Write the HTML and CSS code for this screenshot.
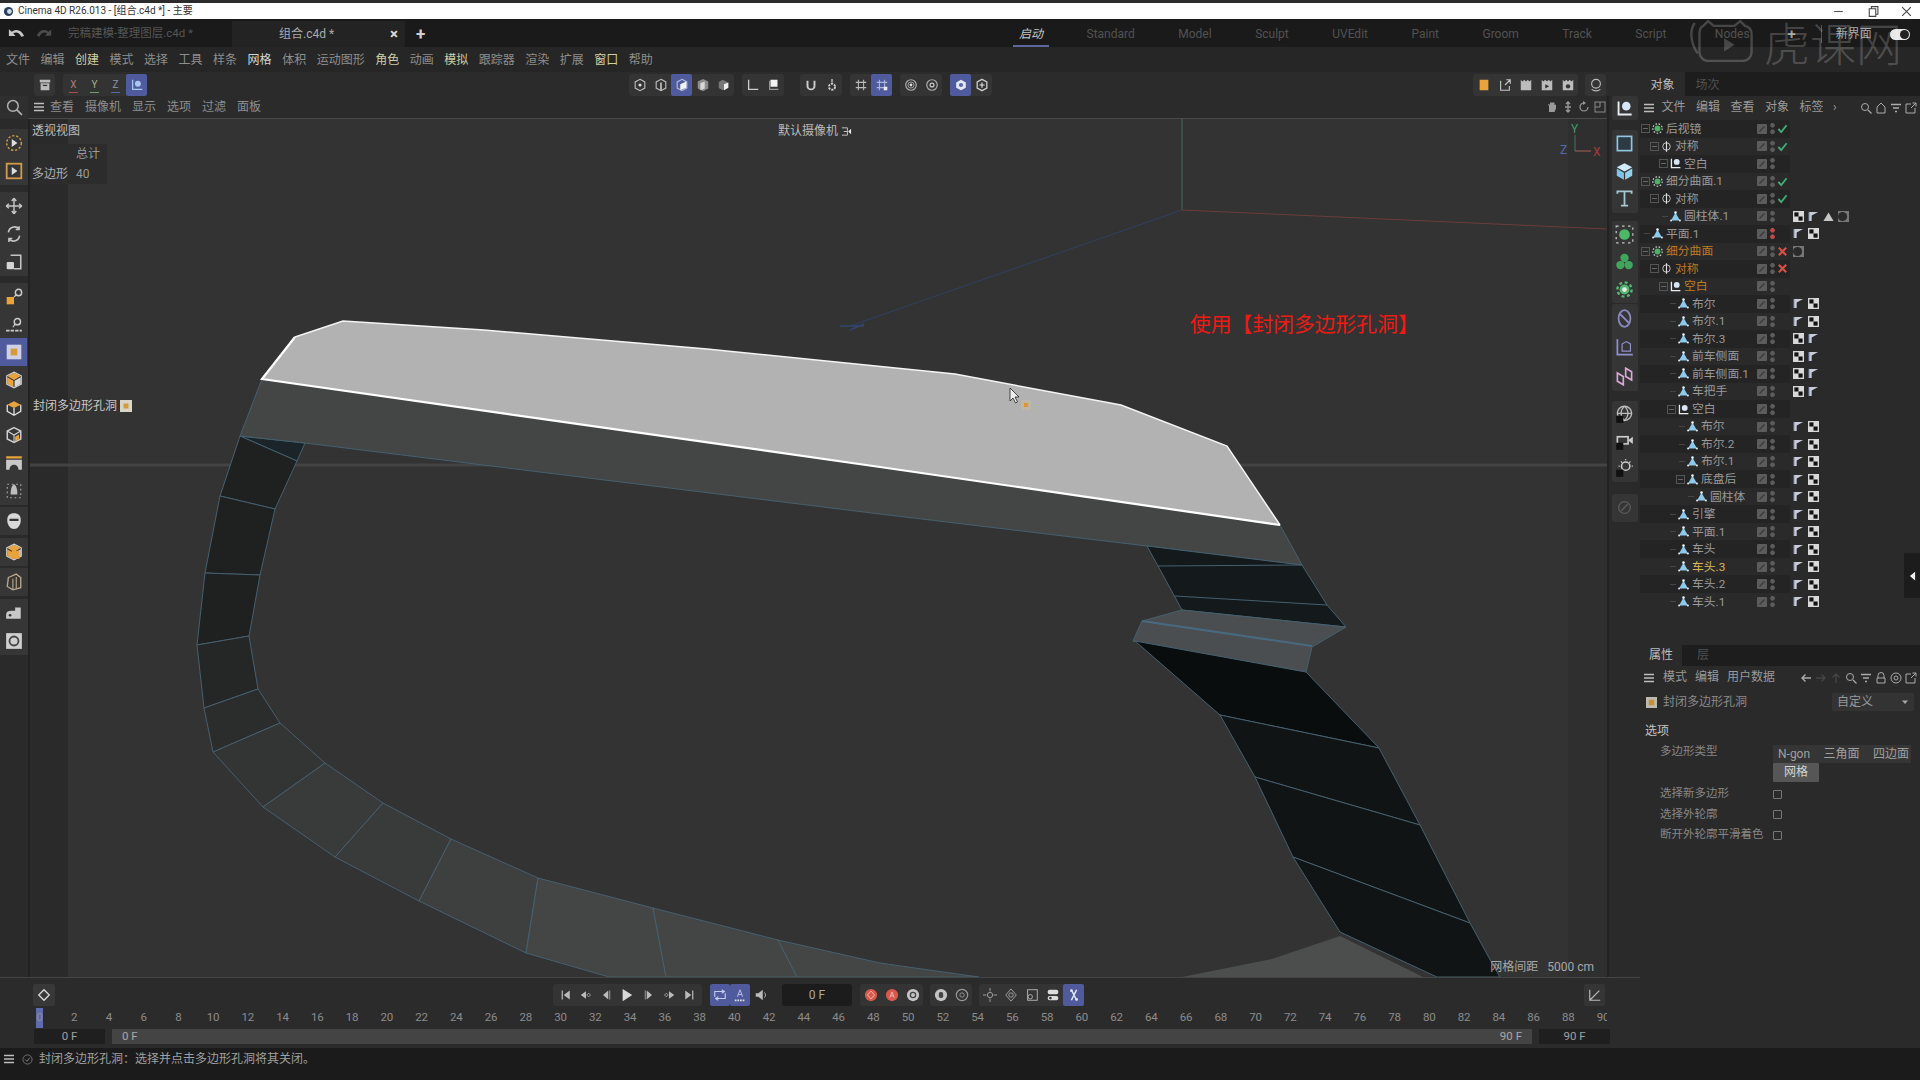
FILE: index.html
```html
<!DOCTYPE html>
<html lang="zh">
<head>
<meta charset="utf-8">
<title>Cinema 4D</title>
<link rel="stylesheet" href="styles.css">
</head>
<body>
<svg class="defs" width="0" height="0">
  <symbol id="nul" viewBox="0 0 16 16"><path d="M3 2v11h11" fill="none" stroke="#e8eef4" stroke-width="1.6"/><circle cx="9.5" cy="6" r="3.6" fill="#d6e6f6"/></symbol>
  <symbol id="sds" viewBox="0 0 16 16"><circle cx="8" cy="8" r="3.6" fill="#4fb06a"/><circle cx="8" cy="8" r="5.8" fill="none" stroke="#c9d6cc" stroke-width="1.4" stroke-dasharray="2 2"/></symbol>
  <symbol id="sym" viewBox="0 0 16 16"><circle cx="8" cy="8" r="4.6" fill="none" stroke="#c4c4c4" stroke-width="1.2"/><path d="M8 1.5v13" stroke="#e0e0e0" stroke-width="1.4"/></symbol>
  <symbol id="pol" viewBox="0 0 16 16"><path d="M8 3 13.5 13h-11z" fill="#8ec8ea"/><circle cx="8" cy="3.2" r="1.6" fill="#e8f2f8"/><circle cx="2.6" cy="13" r="1.3" fill="#dfeaf2"/><circle cx="13.4" cy="13" r="1.3" fill="#dfeaf2"/></symbol>
  <symbol id="ok" viewBox="0 0 12 12"><path d="M1.5 6.5 4.6 10 10.5 2.5" fill="none" stroke="#3fae78" stroke-width="2"/></symbol>
  <symbol id="no" viewBox="0 0 12 12"><path d="M2 2l8 8M10 2l-8 8" stroke="#d4504a" stroke-width="2.4"/></symbol>
  <symbol id="chk" viewBox="0 0 12 12"><rect width="12" height="12" fill="#d8d8d8"/><rect x="1.5" y="1.5" width="4.5" height="4.5" fill="#111"/><rect x="6" y="6" width="4.5" height="4.5" fill="#111"/></symbol>
  <symbol id="flag" viewBox="0 0 12 12"><path d="M1 1h10L4 5v6H1z" fill="#c8ccd8"/><path d="M1 1v10" stroke="#6f7ba0"/></symbol>
  <symbol id="tri" viewBox="0 0 12 12"><path d="M6 1.5 11.500 11H.5z" fill="#c6c6c6"/></symbol>
  <symbol id="mat" viewBox="0 0 12 12"><rect width="12" height="12" fill="#777"/><circle cx="5" cy="6" r="5" fill="#2a2a2a"/></symbol>
  <symbol id="vis" viewBox="0 0 10 10"><rect width="10" height="10" rx="1" fill="#5c5c5c"/><path d="M2.500 7.500 7.500 2.500" stroke="#3a3a3a" stroke-width="1.4"/></symbol>
  <symbol id="burger" viewBox="0 0 12 12"><path d="M1 2.500h10M1 6h10M1 9.500h10" stroke="#bdbdbd" stroke-width="1.400"/></symbol>
  <symbol id="cube" viewBox="0 0 16 16"><path d="M8 1.500 14 4.500v7L8 14.500 2 11.500v-7z" fill="none" stroke="#cfcfcf" stroke-width="1.300"/><path d="M2 4.500 8 8l6-3.500M8 8v6.500" fill="none" stroke="#cfcfcf"/></symbol>
  <symbol id="cubeo" viewBox="0 0 16 16"><path d="M8 1.500 14 4.500 8 8 2 4.500z" fill="#e8a33c"/><path d="M2 5.500 7.500 8.700v5.800L2 11.500z" fill="#e8a33c"/><path d="M14 5.500 8.500 8.700v5.800L14 11.500z" fill="#d8d8d8"/><path d="M8 1 14.500 4.300v7.400L8 15 1.500 11.700V4.300z" fill="none" stroke="#cfcfcf"/></symbol>
  <symbol id="cog" viewBox="0 0 16 16"><circle cx="8" cy="8" r="4.200" fill="#54b672"/><circle cx="8" cy="8" r="2" fill="#e4ece6"/><circle cx="8" cy="8" r="6" fill="none" stroke="#54b672" stroke-width="2" stroke-dasharray="2.500 2.200"/></symbol>
</svg>

<header class="title">
  <svg class="t-logo" viewBox="0 0 12 12"><circle cx="6" cy="6" r="5" fill="#27405f"/><circle cx="7" cy="6" r="2.600" fill="#cfd8e4"/></svg>
  <span>Cinema 4D R26.013 - [组合.c4d *] - 主要</span>
  <div class="winbtns">
    <svg viewBox="0 0 12 12"><path d="M2 6h8" stroke="#555"/></svg>
    <svg viewBox="0 0 12 12"><path d="M3 3.500h6v7H3zM5 3.500v-2h6v7H9" fill="none" stroke="#444"/></svg>
    <svg viewBox="0 0 12 12"><path d="M2 2l8 8M10 2l-8 8" stroke="#444"/></svg>
  </div>
</header>

<nav class="tabs">
  <svg class="undo" viewBox="0 0 20 12"><path d="M2 1v7h7L6.500 5.500C9 3.500 13 4 15 9l3-1C15.500 1.500 9.500 0 5 3.500z" fill="#c8c8c8"/></svg>
  <svg class="redo" viewBox="0 0 20 12"><path d="M18 1v7h-7l2.500-2.500C11 3.500 7 4 5 9L2 8c2.500-6.500 8.500-8 13-4.500z" fill="#4c4c4c"/></svg>
  <span class="doc">完稿建模-整理图层.c4d *</span>
  <div class="doc-on"><span>组合.c4d *</span><b>×</b></div>
  <b class="plus">+</b>
  <div class="layouts">
    <span class="on">启动</span><span>Standard</span><span>Model</span><span>Sculpt</span><span>UVEdit</span><span>Paint</span><span>Groom</span><span>Track</span><span>Script</span><span class="nodes">Nodes</span>
  </div>
  <b class="plus2">+</b>
  <i class="bar-sep"></i>
  <span class="newui">新界面</span>
  <i class="toggle"></i>
</nav>

<nav class="menu">
  <span>文件</span><span>编辑</span><span class="hi">创建</span><span>模式</span><span>选择</span><span>工具</span><span>样条</span><span class="wh">网格</span><span>体积</span><span>运动图形</span><span class="hi">角色</span><span>动画</span><span class="hi">模拟</span><span>跟踪器</span><span>渲染</span><span>扩展</span><span class="hi">窗口</span><span>帮助</span>
</nav>

<div class="work">
  <div class="stage">
    <div class="toolbar">
      <div class="tg archive"><button class="b"><svg viewBox="0 0 16 16"><path d="M2 2h12v3H2zM3 6h10v8H3z" fill="#bbb"/><path d="M5.500 8.500h5" stroke="#333" stroke-width="1.500"/></svg></button></div>
      <div class="tg xyz">
        <button class="b ax x">X</button><button class="b ax y">Y</button><button class="b ax z">Z</button>
        <button class="b blue"><svg viewBox="0 0 16 16"><path d="M3 2v11h11" fill="none" stroke="#a8c8f0" stroke-width="1.400"/><circle cx="9" cy="6.500" r="3.400" fill="#a8c8f0"/></svg></button>
      </div>
      <div class="center-tools">
        <div class="tg">
          <button class="b"><svg viewBox="0 0 16 16"><path d="M8 1.500 13.500 4.500v7L8 14.500 2.500 11.500v-7z" fill="none" stroke="#bbb" stroke-width="1.300"/><circle cx="8" cy="8" r="1.800" fill="#ddd"/></svg></button>
          <button class="b"><svg viewBox="0 0 16 16"><path d="M8 1.500 13.500 4.500v7L8 14.500 2.500 11.500v-7z" fill="none" stroke="#bbb" stroke-width="1.300"/><path d="M8 5v9" stroke="#ddd" stroke-width="1.600"/></svg></button>
          <button class="b blue"><svg viewBox="0 0 16 16"><path d="M8 1.500 13.500 4.500v7L8 14.500 2.500 11.500v-7z" fill="none" stroke="#aeb7dc" stroke-width="1.300"/><path d="M6 7l7-3v7l-7 3z" fill="#f2f2f2"/></svg></button>
          <button class="b"><svg viewBox="0 0 16 16"><path d="M8 1 14 4v8l-6 3-6-3V4z" fill="#8c8c8c"/><path d="M5 6l5-2v8l-5 2z" fill="#d8d8d8"/></svg></button>
          <button class="b"><svg viewBox="0 0 16 16"><path d="M6.500 2 12 4.500v7L6.500 14 2 11.500v-7z" fill="#777"/><path d="M8 7l5-2v6l-5 3z" fill="#eee"/></svg></button>
        </div>
        <div class="tg">
          <button class="b"><svg viewBox="0 0 16 16"><path d="M3 2v11h11" fill="none" stroke="#ccc" stroke-width="1.500"/></svg></button>
          <button class="b"><svg viewBox="0 0 16 16"><path d="M3 3v10h10" fill="none" stroke="#999" stroke-width="1.300"/><rect x="4" y="2" width="8" height="8" fill="#f2f2f2"/></svg></button>
        </div>
        <div class="tg snap">
          <button class="b"><svg viewBox="0 0 16 16"><path d="M4 3v6a4 4 0 0 0 8 0V3" fill="none" stroke="#ccc" stroke-width="2.200"/></svg></button>
          <button class="b"><svg viewBox="0 0 16 16"><path d="M8 1v4" stroke="#ccc" stroke-width="1.500"/><circle cx="8" cy="10" r="3.500" fill="none" stroke="#ccc" stroke-width="2.200" stroke-dasharray="2.500 1.200"/></svg></button>
        </div>
        <div class="tg">
          <button class="b"><svg viewBox="0 0 16 16"><path d="M5 2v12M11 2v12M2 5h12M2 11h12" stroke="#bbb" stroke-width="1.200"/></svg></button>
          <button class="b blue"><svg viewBox="0 0 16 16"><path d="M5 2v12M11 2v12M2 5h12M2 11h12" stroke="#aeb7dc" stroke-width="1.200"/><rect x="10" y="10" width="4" height="4" fill="#eee"/></svg></button>
        </div>
        <div class="tg">
          <button class="b"><svg viewBox="0 0 16 16"><circle cx="8" cy="8" r="6" fill="none" stroke="#aaa" stroke-width="1.400"/><circle cx="8" cy="8" r="3.500" fill="none" stroke="#aaa"/><circle cx="8" cy="8" r="1.600" fill="#ddd"/></svg></button>
          <button class="b"><svg viewBox="0 0 16 16"><circle cx="8" cy="8" r="6" fill="none" stroke="#aaa" stroke-width="1.400"/><circle cx="8" cy="8" r="2.200" fill="none" stroke="#ccc" stroke-width="1.400"/></svg></button>
        </div>
        <div class="tg">
          <button class="b blue"><svg viewBox="0 0 16 16"><path d="M8 2 13.500 5v6L8 14 2.500 11V5z" fill="#e4e7f4"/><circle cx="8" cy="8" r="2.400" fill="#5a68a8"/></svg></button>
          <button class="b"><svg viewBox="0 0 16 16"><path d="M8 1.500 13.500 4.500v7L8 14.500 2.500 11.500v-7z" fill="none" stroke="#ccc" stroke-width="1.500"/><path d="M5 8h6M8 5v6" stroke="#ddd" stroke-width="1.400"/></svg></button>
        </div>
      </div>
      <div class="tg right-tools">
        <button class="b"><svg viewBox="0 0 16 16"><rect x="3" y="2" width="10" height="12" fill="#e8a33c"/></svg></button>
        <button class="b"><svg viewBox="0 0 16 16"><path d="M3 3v11h10V9M8 8l6-6M9.500 2H14v4.500" fill="none" stroke="#c4c4c4" stroke-width="1.300"/></svg></button>
        <button class="b"><svg viewBox="0 0 16 16"><path d="M2 2l2 2 2-2 2 2 2-2 2 2 2-2v12H2z" fill="#bcbcbc"/></svg></button>
        <button class="b"><svg viewBox="0 0 16 16"><path d="M2 2l2 2 2-2 2 2 2-2 2 2 2-2v12H2z" fill="#bcbcbc"/><path d="M6 7v5l4.500-2.500z" fill="#333"/></svg></button>
        <button class="b"><svg viewBox="0 0 16 16"><path d="M2 2l2 2 2-2 2 2 2-2 2 2 2-2v12H2z" fill="#bcbcbc"/><circle cx="8" cy="9.500" r="2.500" fill="#333"/></svg></button>
      </div>
      <div class="tg last-tool"><button class="b"><svg viewBox="0 0 16 16"><circle cx="8" cy="6.500" r="5" fill="none" stroke="#bbb" stroke-width="1.300"/><path d="M3 13c3 2 7 2 10 0" fill="none" stroke="#bbb" stroke-width="1.300"/></svg></button></div>
    </div>

    <div class="mid">
      <aside class="tools">
        <div class="search"><svg viewBox="0 0 16 16"><circle cx="6.500" cy="6.500" r="5" fill="none" stroke="#b0b0b0" stroke-width="1.400"/><path d="M10 10l5 5" stroke="#b0b0b0" stroke-width="1.600"/></svg></div>
        <div class="tool-g g1">
          <button class="tb"><svg viewBox="0 0 16 16"><circle cx="8" cy="8" r="6.500" fill="none" stroke="#c99a4e" stroke-width="1.300" stroke-dasharray="2 1.600"/><path d="M6 4.500v7l5-3.500z" fill="#ddd"/></svg></button>
          <button class="tb"><svg viewBox="0 0 16 16"><rect x="1.500" y="1.500" width="13" height="13" fill="none" stroke="#d09a48" stroke-width="1.600"/><path d="M6 4.500v7l5-3.500z" fill="#ddd"/></svg></button>
        </div>
        <div class="tool-g g2">
          <button class="tb"><svg viewBox="0 0 16 16"><path d="M8 1v14M1 8h14M8 1 6 3.500M8 1l2 2.500M8 15l-2-2.500M8 15l2-2.500M1 8l2.500-2M1 8l2.500 2M15 8l-2.500-2M15 8l-2.500 2" fill="none" stroke="#c4c4c4" stroke-width="1.300"/></svg></button>
          <button class="tb"><svg viewBox="0 0 16 16"><path d="M3 6.500A5.500 5.500 0 0 1 12.500 3.500M13 9.500A5.500 5.500 0 0 1 3.500 12.500M12.500 1v3h-3M3.500 15v-3h3" fill="none" stroke="#c4c4c4" stroke-width="1.400"/></svg></button>
          <button class="tb"><svg viewBox="0 0 16 16"><path d="M5 2h9v12H8" fill="none" stroke="#c4c4c4" stroke-width="1.400"/><rect x="1.500" y="8" width="6.500" height="6.500" rx="1" fill="#d4d4d4"/></svg></button>
        </div>
        <div class="tool-g g3">
          <button class="tb"><svg viewBox="0 0 16 16"><rect x="1.500" y="8" width="6.500" height="6.500" fill="#e8a33c"/><circle cx="12" cy="4" r="2.800" fill="none" stroke="#ccc" stroke-width="1.300"/><path d="M10 6 8 8" stroke="#ccc"/></svg></button>
          <button class="tb"><svg viewBox="0 0 16 16"><path d="M1 13h14" stroke="#ccc" stroke-width="1.500" stroke-dasharray="3 1"/><circle cx="11" cy="5" r="2.800" fill="none" stroke="#ccc" stroke-width="1.300"/><path d="M9 7 7 10" stroke="#ccc"/></svg></button>
          <button class="tb tb-on"><svg viewBox="0 0 16 16"><rect x="1.500" y="1.500" width="13" height="13" fill="#cfd2e6"/><rect x="5" y="5" width="6" height="6" fill="#d9983c"/></svg></button>
          <button class="tb"><svg viewBox="0 0 16 16"><use href="#cubeo"/></svg></button>
          <button class="tb"><svg viewBox="0 0 16 16"><path d="M8 2 14 5 8 8 2 5z" fill="#e8a33c"/><path d="M2 5v6l6 3.500L14 11V5M8 8v6.500" fill="none" stroke="#ddd" stroke-width="1.200"/></svg></button>
          <button class="tb"><svg viewBox="0 0 16 16"><use href="#cube"/><path d="M9 9.500l3.500-2v4l-3.500 2z" fill="#e8a33c"/></svg></button>
          <button class="tb"><svg viewBox="0 0 16 16"><path d="M1 2h14v2H1z" fill="#e8a33c"/><path d="M1 5h14v9h-3c0-6-8-6-8 0H1z" fill="#c8c8c8"/></svg></button>
          <button class="tb"><svg viewBox="0 0 16 16"><rect x="2" y="2" width="12" height="12" fill="none" stroke="#aaa" stroke-dasharray="1.500 2.500"/><path d="M8 2c2 1 3 4 3 9H5c0-5 1-8 3-9z" fill="#bdbdbd"/></svg></button>
        </div>
        <div class="tool-g g4"><button class="tb"><svg viewBox="0 0 16 16"><path d="M8 1c4 0 6 2 6 6 0 5-3 8-6 8s-6-3-6-8c0-4 2-6 6-6z" fill="#d8d8d8"/><path d="M4 6h8v2H4z" fill="#333"/></svg></button></div>
        <div class="tool-g g4"><button class="tb"><svg viewBox="0 0 16 16"><use href="#cubeo"/><rect x="6" y="7" width="7" height="7" fill="#e8a33c"/></svg></button></div>
        <div class="tool-g g4"><button class="tb"><svg viewBox="0 0 16 16"><path d="M3 4l7-3 4 3v9l-7 2-5-3z" fill="none" stroke="#b8a88c" stroke-width="1.200"/><path d="M7 5v10M10 3.500V14" stroke="#b8a88c"/></svg></button></div>
        <div class="tool-g g4">
          <button class="tb"><svg viewBox="0 0 16 16"><path d="M1 13V9c0-2 2-3 5-3h3V3h5v10z" fill="#c8c8c8"/><circle cx="4.500" cy="10" r="1.200" fill="#333"/></svg></button>
          <button class="tb"><svg viewBox="0 0 16 16"><rect x="1" y="1" width="14" height="14" fill="#cfcfcf"/><circle cx="8" cy="8" r="4" fill="none" stroke="#444" stroke-width="1.600"/></svg></button>
        </div>
      </aside>

      <div class="center">
        <div class="viewbar">
          <svg class="burger"><use href="#burger"/></svg>
          <span>查看</span><span>摄像机</span><span>显示</span><span>选项</span><span>过滤</span><span>面板</span>
          <div class="nav-ic">
            <svg viewBox="0 0 12 12"><path d="M3 11V5L2 3.500 3 3l1 1V1.500h4.500V4l1.500-.5v4L8.500 11z" fill="#9a9a9a"/></svg>
            <svg viewBox="0 0 12 12"><path d="M6 1v10M4 3l2-2 2 2M4 9l2 2 2-2M3 6h6" fill="none" stroke="#9a9a9a" stroke-width="1.300"/></svg>
            <svg viewBox="0 0 12 12"><path d="M6 2a4 4 0 1 0 4 4" fill="none" stroke="#9a9a9a" stroke-width="1.200"/><path d="M5 0v4l3-2z" fill="#9a9a9a"/></svg>
            <svg viewBox="0 0 12 12"><rect x="1" y="1" width="10" height="10" fill="none" stroke="#8a8a8a"/><path d="M1 6h5V1" fill="none" stroke="#8a8a8a"/></svg>
          </div>
        </div>

        <main class="viewport">
          <svg class="scene" viewBox="30 119 1577 858" width="1577" height="858">
            <rect x="30" y="119" width="1577" height="858" fill="#333"/>
            <rect x="30" y="119" width="38" height="858" fill="#2a2a2a"/>
            <rect x="1568" y="119" width="39" height="858" fill="#2f2f2f"/>
            <path d="M30 465H1607" stroke="#434343" stroke-width="3"/>
            <path d="M1182 119V210" stroke="#3f6b5e"/>
            <path d="M1182 210 1607 229" stroke="#6a3c3a"/>
            <path d="M1182 210 850 326" stroke="#2f4160"/>
            <path d="M840 326h24M850 330l14-6" stroke="#32466e" stroke-width="1.500"/>

            <g class="mesh">
              <polygon class="m0" points="240,436 305,443 297,461"/>
              <polygon class="m1" points="240,436 297,461 275,509 220,496"/>
              <polygon class="m1" points="220,496 275,509 260,575 205,573"/>
              <polygon class="m1" points="205,573 260,575 249,636 197,645"/>
              <polygon class="m2" points="197,645 249,636 258,689 204,708"/>
              <polygon class="m3" points="204,708 258,689 280,723 213,752"/>
              <polygon class="m4" points="213,752 280,723 325,763 263,807"/>
              <polygon class="m5" points="263,807 325,763 383,803 335,857"/>
              <polygon class="m5" points="335,857 383,803 451,839 419,901"/>
              <polygon class="m6" points="419,901 451,839 538,878 526,953"/>
              <polygon class="m7" points="526,953 538,878 653,908 666,977 609,977"/>
              <polygon class="m7" points="666,977 653,908 778,940 797,977"/>
              <polygon class="m7" points="797,977 778,940 880,963 922,969 979,977"/>
              <polygon class="apron" points="262,379 880,467 1280,525 1302,565 1147,546 880,514 305,443 240,436"/>
              <polygon class="stripe" points="1147,546 1302,565 1327,605 1346,627 1182,610 1158,566"/>
              <path class="edge" d="M1158 566 1302 565M1175 596 1327 605"/>
              <polygon class="ledge" points="1182,610 1346,627 1312,647 1306,672 1133,641 1142,621"/>
              <path class="edge2" d="M1142 621 1312 646"/>
              <polygon class="low1" points="1135,641 1306,672 1379,748 1220,715"/>
              <polygon class="low2" points="1220,715 1379,748 1420,825 1255,777"/>
              <polygon class="low2" points="1255,777 1420,825 1470,923 1293,857"/>
              <polygon class="low2" points="1293,857 1470,923 1493,965 1500,977 1437,977 1340,932"/>
              <polygon class="base" points="1182,977 1272,959 1340,936 1423,977"/>
              <polygon class="face" points="262,379 295,337 343,321 484,330 707,349 955,374 1121,405 1227,446 1280,525 880,467"/>
              <path class="rim" d="M295 337 343 321 484 330 707 349 955 374 1121 405 1227 446 1280 525"/>
              <path class="rim2" d="M295 337 262 379 880 467 1280 525"/>
            </g>

            <path d="M1010 388v13l3-3 2.500 5 2-1-2.500-5h4z" fill="#eee" stroke="#222" stroke-width=".8"/>
            <rect x="1021" y="400" width="10" height="10" fill="#bdb7aa"/>
            <rect x="1024" y="403" width="4" height="4" fill="#e0962f"/>

            <path d="M1575 135V151H1591" fill="none" stroke="#3d7a5f"/>
            <path d="M1575 151H1591" stroke="#a0403a"/>
            <text class="ax-y" x="1571" y="133">Y</text>
            <text class="ax-x" x="1593" y="156">X</text>
            <text class="ax-z" x="1560" y="154">Z</text>
          </svg>
          <span class="vp-title">透视视图</span>
          <div class="stats"><span></span><span>总计</span><span>多边形</span><span>40</span></div>
          <span class="cam">默认摄像机 <svg viewBox="0 0 12 12"><path d="M1 2h6v8H1M3 6h4" fill="none" stroke="#ccc"/><path d="M11 3v6L8 6z" fill="#eee"/></svg></span>
          <span class="hint">封闭多边形孔洞 <svg viewBox="0 0 12 12"><rect width="12" height="12" fill="#d8d4c8"/><rect x="3.500" y="3.500" width="5" height="5" fill="#d49a3e"/></svg></span>
          <span class="caption">使用【封闭多边形孔洞】</span>
          <span class="gridinfo">网格间距&nbsp;&nbsp;&nbsp;5000 cm</span>
        </main>
      </div>

      <aside class="strip">
        <div class="sg s1"><button class="sb"><svg viewBox="0 0 16 16"><use href="#nul"/></svg></button></div>
        <div class="sg s2">
          <button class="sb"><svg viewBox="0 0 16 16"><rect x="2" y="2" width="12" height="12" fill="#2d3a44" stroke="#8fc6e0" stroke-width="1.400"/></svg></button>
          <button class="sb"><svg viewBox="0 0 16 16"><path d="M8 1 14.500 4.500 8 8 1.500 4.500z" fill="#cfeafa"/><path d="M1.500 5.500 7.500 9v6l-6-3.500z" fill="#7cc4ec"/><path d="M14.500 5.500 8.500 9v6l6-3.500z" fill="#92d0f2"/></svg></button>
          <button class="sb"><svg viewBox="0 0 16 16"><path d="M2 4V2h12v2M8 2v12M5 14h6" fill="none" stroke="#a6c6d4" stroke-width="1.500"/></svg></button>
        </div>
        <div class="sg s3">
          <button class="sb"><svg viewBox="0 0 16 16"><circle cx="8" cy="8" r="4.500" fill="#4fb868"/><rect x="1" y="1" width="14" height="14" fill="none" stroke="#ccc" stroke-dasharray="2 3"/></svg></button>
          <button class="sb"><svg viewBox="0 0 16 16"><circle cx="8" cy="5" r="3.500" fill="#3ea75c"/><circle cx="4.500" cy="11" r="3.500" fill="#3ea75c"/><circle cx="11.500" cy="11" r="3.500" fill="#3ea75c"/></svg></button>
          <button class="sb"><svg viewBox="0 0 16 16"><use href="#cog"/></svg></button>
        </div>
        <div class="sg s4">
          <button class="sb"><svg viewBox="0 0 16 16"><ellipse cx="8" cy="8" rx="5" ry="7" fill="none" stroke="#8a88c0" stroke-width="1.500"/><path d="M4 4l8 8" stroke="#8a88c0" stroke-width="1.500"/></svg></button>
          <button class="sb"><svg viewBox="0 0 16 16"><path d="M2 1v13h13" fill="none" stroke="#8f8ed0" stroke-width="1.500"/><path d="M6 5l3.500-2L13 5v6H6z" fill="none" stroke="#8f8ed0"/></svg></button>
          <button class="sb"><svg viewBox="0 0 16 16"><path d="M2 5l5 3v7l-5-3zM9 1l5 3v7l-5-3z" fill="none" stroke="#d8a8d8" stroke-width="1.400"/></svg></button>
        </div>
        <div class="sg s5">
          <button class="sb"><svg viewBox="0 0 16 16"><circle cx="8" cy="7" r="6" fill="none" stroke="#bbb" stroke-width="1.200"/><path d="M2 7h12M8 1c-4 4-4 8 0 12M8 1c4 4 4 8 0 12" fill="none" stroke="#bbb"/><rect x="1" y="9" width="6" height="6" fill="#111"/></svg></button>
          <button class="sb"><svg viewBox="0 0 16 16"><rect x="2" y="4" width="9" height="6" fill="none" stroke="#ccc" stroke-width="1.400"/><path d="M15 4v6l-4-3z" fill="#ccc"/><rect x="1" y="9" width="6" height="6" fill="#111"/></svg></button>
          <button class="sb"><svg viewBox="0 0 16 16"><circle cx="9" cy="6" r="3.500" fill="none" stroke="#ccc" stroke-width="1.300"/><path d="M9 0v1M14 6h1M3 6h1M13 2l-1 1M5 2l1 1" stroke="#ccc"/><rect x="1" y="9" width="6" height="6" fill="#111"/></svg></button>
        </div>
        <div class="sg s6"><button class="sb"><svg viewBox="0 0 16 16"><circle cx="8" cy="8" r="5.500" fill="none" stroke="#5a5a5a" stroke-width="1.300"/><path d="M5 11l6-6" stroke="#5a5a5a" stroke-width="1.400"/></svg></button></div>
      </aside>
    </div>

    <section class="timeline">
      <div class="transport">
        <button class="b key"><svg viewBox="0 0 16 16"><path d="M8 2 14 8 8 14 2 8z" fill="none" stroke="#ddd" stroke-width="1.500"/></svg></button>
        <div class="play">
          <svg viewBox="0 0 16 16"><path d="M3 2v12" stroke="#bbb" stroke-width="1.600"/><path d="M13 2v12L5 8z" fill="#bbb"/></svg>
          <svg viewBox="0 0 16 16"><path d="M8 3v10L1 8z" fill="#bbb"/><path d="M11.500 5.500 14 8l-2.500 2.500L9 8z" fill="none" stroke="#bbb"/></svg>
          <svg viewBox="0 0 16 16"><path d="M11 2v12L4 8z" fill="#bbb"/><path d="M13 2v12" stroke="#bbb"/></svg>
          <svg viewBox="0 0 16 16"><path d="M3 1v14l11-7z" fill="#d8d8d8"/></svg>
          <svg viewBox="0 0 16 16"><path d="M5 2v12l7-6z" fill="#bbb"/><path d="M3 2v12" stroke="#bbb"/></svg>
          <svg viewBox="0 0 16 16"><path d="M8 3v10l7-5z" fill="#bbb"/><path d="M4.500 5.500 7 8l-2.500 2.500L2 8z" fill="none" stroke="#bbb"/></svg>
          <svg viewBox="0 0 16 16"><path d="M13 2v12" stroke="#bbb" stroke-width="1.600"/><path d="M3 2v12l8-6z" fill="#bbb"/></svg>
        </div>
        <div class="loop">
          <button class="b blue"><svg viewBox="0 0 16 16"><path d="M2 10V4h10M14 6v6H4M10 2l3 2-3 2M6 14l-3-2 3-2" fill="none" stroke="#c4cbec" stroke-width="1.300"/></svg></button>
          <button class="b blue"><svg viewBox="0 0 16 16"><path d="M2 14h12" stroke="#ddd" stroke-width="2" stroke-dasharray="2 1"/><path d="M5 10l3-8 3 8M6 7.500h4" fill="none" stroke="#c4cbec"/></svg></button>
          <button class="b plain"><svg viewBox="0 0 16 16"><path d="M2 6h3l5-4v12l-5-4H2z" fill="#bbb"/><path d="M12 5c1.500 2 1.500 4 0 6" fill="none" stroke="#bbb"/></svg></button>
        </div>
        <div class="frame">0 F</div>
        <div class="tg rec">
          <button class="b"><svg viewBox="0 0 16 16"><circle cx="8" cy="8" r="7" fill="#d8594c"/><path d="M8 3.500 12 8l-4 4.500L4 8z" fill="none" stroke="#f4c0b8"/></svg></button>
          <button class="b"><svg viewBox="0 0 16 16"><circle cx="8" cy="8" r="7" fill="#d8594c"/><path d="M5.500 11 8 4.500 10.500 11M6.500 9h3" fill="none" stroke="#f4c0b8"/></svg></button>
          <button class="b"><svg viewBox="0 0 16 16"><circle cx="8" cy="8" r="7" fill="#c4c4c4"/><circle cx="8" cy="8" r="3" fill="none" stroke="#444" stroke-width="1.500"/></svg></button>
        </div>
        <div class="tg rec2">
          <button class="b"><svg viewBox="0 0 16 16"><circle cx="8" cy="8" r="7" fill="#c4c4c4"/><rect x="5.500" y="4.500" width="5" height="7" rx="2" fill="#444"/></svg></button>
          <button class="b"><svg viewBox="0 0 16 16"><circle cx="8" cy="8" r="6.500" fill="none" stroke="#999" stroke-width="1.300"/><circle cx="8" cy="8" r="2.500" fill="none" stroke="#999"/></svg></button>
        </div>
        <div class="tg rec3">
          <button class="b"><svg viewBox="0 0 16 16"><circle cx="8" cy="8" r="3" fill="none" stroke="#aaa"/><path d="M8 0v4M8 12v4M0 8h4M12 8h4" stroke="#aaa"/></svg></button>
          <button class="b"><svg viewBox="0 0 16 16"><path d="M8 1 14 8 8 15 2 8z" fill="none" stroke="#aaa"/><circle cx="8" cy="8" r="2.500" fill="none" stroke="#aaa"/></svg></button>
          <button class="b"><svg viewBox="0 0 16 16"><rect x="3" y="2" width="11" height="12" fill="none" stroke="#bbb"/><circle cx="6" cy="10" r="2.500" fill="#2e2e2e" stroke="#bbb"/></svg></button>
          <button class="b"><svg viewBox="0 0 16 16"><rect x="2" y="2" width="12" height="5" rx="2" fill="#ddd"/><rect x="2" y="9" width="12" height="5" rx="2" fill="#ddd"/><circle cx="5" cy="11.500" r="1.500" fill="#333"/></svg></button>
          <button class="b blue"><svg viewBox="0 0 16 16"><path d="M5 2 11 14M11 2 5 14" stroke="#dfe3f6" stroke-width="1.800"/><circle cx="5" cy="3" r="1.500" fill="#dfe3f6"/><circle cx="11" cy="13" r="1.500" fill="#dfe3f6"/></svg></button>
        </div>
        <button class="b curve"><svg viewBox="0 0 16 16"><path d="M2 2v12h12M2 14 13 3" fill="none" stroke="#bbb" stroke-width="1.300"/></svg></button>
      </div>
      <div class="ruler">
        <span class="cur">0</span><span>2</span><span>4</span><span>6</span><span>8</span><span>10</span><span>12</span><span>14</span><span>16</span><span>18</span><span>20</span><span>22</span><span>24</span><span>26</span><span>28</span><span>30</span><span>32</span><span>34</span><span>36</span><span>38</span><span>40</span><span>42</span><span>44</span><span>46</span><span>48</span><span>50</span><span>52</span><span>54</span><span>56</span><span>58</span><span>60</span><span>62</span><span>64</span><span>66</span><span>68</span><span>70</span><span>72</span><span>74</span><span>76</span><span>78</span><span>80</span><span>82</span><span>84</span><span>86</span><span>88</span><span>90</span>
      </div>
      <div class="range">
        <div class="field">0 F</div>
        <div class="slider"><span>0 F</span><span>90 F</span></div>
        <div class="field">90 F</div>
      </div>
    </section>
  </div>

  <aside class="side">
    <div class="ptabs"><span class="on">对象</span><span>场次</span></div>
    <div class="pmenu">
      <svg class="burger"><use href="#burger"/></svg>
      <span>文件</span><span>编辑</span><span>查看</span><span>对象</span><span>标签</span><em>›</em>
      <div class="pm-ic">
        <svg viewBox="0 0 12 12"><circle cx="5" cy="5" r="3.500" fill="none" stroke="#aaa"/><path d="M8 8l3.500 3.500" stroke="#aaa" stroke-width="1.300"/></svg>
        <svg viewBox="0 0 12 12"><path d="M2 11V5l4-4 4 4v6z" fill="none" stroke="#aaa"/></svg>
        <svg viewBox="0 0 12 12"><path d="M1 2.500h10M3 6h6M5 9.500h2" stroke="#aaa" stroke-width="1.300"/></svg>
        <svg viewBox="0 0 12 12"><path d="M10 6v5H1V2h5M6 6l5-5M7.500 1H11v3.500" fill="none" stroke="#aaa"/></svg>
      </div>
    </div>
    <div class="tree">
      <div class="row d0"><i class="exp box"></i><svg class="oi"><use href="#sds"/></svg><span class="nm">后视镜</span><svg class="vis"><use href="#vis"/></svg><i class="dots"></i><svg class="st"><use href="#ok"/></svg></div>
      <div class="row d1"><i class="exp box"></i><svg class="oi"><use href="#sym"/></svg><span class="nm">对称</span><svg class="vis"><use href="#vis"/></svg><i class="dots"></i><svg class="st"><use href="#ok"/></svg></div>
      <div class="row d2"><i class="exp box"></i><svg class="oi"><use href="#nul"/></svg><span class="nm">空白</span><svg class="vis"><use href="#vis"/></svg><i class="dots"></i><i class="st"></i></div>
      <div class="row d0"><i class="exp box"></i><svg class="oi"><use href="#sds"/></svg><span class="nm">细分曲面.1</span><svg class="vis"><use href="#vis"/></svg><i class="dots"></i><svg class="st"><use href="#ok"/></svg></div>
      <div class="row d1"><i class="exp box"></i><svg class="oi"><use href="#sym"/></svg><span class="nm">对称</span><svg class="vis"><use href="#vis"/></svg><i class="dots"></i><svg class="st"><use href="#ok"/></svg></div>
      <div class="row d2"><i class="exp"></i><svg class="oi"><use href="#pol"/></svg><span class="nm">圆柱体.1</span><svg class="vis"><use href="#vis"/></svg><i class="dots"></i><i class="st"></i><svg class="tag"><use href="#chk"/></svg><svg class="tag"><use href="#flag"/></svg><svg class="tag"><use href="#tri"/></svg><svg class="tag"><use href="#mat"/></svg></div>
      <div class="row d0"><i class="exp"></i><svg class="oi"><use href="#pol"/></svg><span class="nm">平面.1</span><svg class="vis"><use href="#vis"/></svg><i class="dots red"></i><i class="st"></i><svg class="tag"><use href="#flag"/></svg><svg class="tag"><use href="#chk"/></svg></div>
      <div class="row d0 org"><i class="exp box"></i><svg class="oi"><use href="#sds"/></svg><span class="nm">细分曲面</span><svg class="vis"><use href="#vis"/></svg><i class="dots"></i><svg class="st"><use href="#no"/></svg><svg class="tag"><use href="#mat"/></svg></div>
      <div class="row d1 org"><i class="exp box"></i><svg class="oi"><use href="#sym"/></svg><span class="nm">对称</span><svg class="vis"><use href="#vis"/></svg><i class="dots"></i><svg class="st"><use href="#no"/></svg></div>
      <div class="row d2 org"><i class="exp box"></i><svg class="oi"><use href="#nul"/></svg><span class="nm">空白</span><svg class="vis"><use href="#vis"/></svg><i class="dots"></i><i class="st"></i></div>
      <div class="row d3"><i class="exp"></i><svg class="oi"><use href="#pol"/></svg><span class="nm">布尔</span><svg class="vis"><use href="#vis"/></svg><i class="dots"></i><i class="st"></i><svg class="tag"><use href="#flag"/></svg><svg class="tag"><use href="#chk"/></svg></div>
      <div class="row d3"><i class="exp"></i><svg class="oi"><use href="#pol"/></svg><span class="nm">布尔.1</span><svg class="vis"><use href="#vis"/></svg><i class="dots"></i><i class="st"></i><svg class="tag"><use href="#flag"/></svg><svg class="tag"><use href="#chk"/></svg></div>
      <div class="row d3"><i class="exp"></i><svg class="oi"><use href="#pol"/></svg><span class="nm">布尔.3</span><svg class="vis"><use href="#vis"/></svg><i class="dots"></i><i class="st"></i><svg class="tag"><use href="#chk"/></svg><svg class="tag"><use href="#flag"/></svg></div>
      <div class="row d3"><i class="exp"></i><svg class="oi"><use href="#pol"/></svg><span class="nm">前车侧面</span><svg class="vis"><use href="#vis"/></svg><i class="dots"></i><i class="st"></i><svg class="tag"><use href="#chk"/></svg><svg class="tag"><use href="#flag"/></svg></div>
      <div class="row d3"><i class="exp"></i><svg class="oi"><use href="#pol"/></svg><span class="nm">前车侧面.1</span><svg class="vis"><use href="#vis"/></svg><i class="dots"></i><i class="st"></i><svg class="tag"><use href="#chk"/></svg><svg class="tag"><use href="#flag"/></svg></div>
      <div class="row d3"><i class="exp"></i><svg class="oi"><use href="#pol"/></svg><span class="nm">车把手</span><svg class="vis"><use href="#vis"/></svg><i class="dots"></i><i class="st"></i><svg class="tag"><use href="#chk"/></svg><svg class="tag"><use href="#flag"/></svg></div>
      <div class="row d3"><i class="exp box"></i><svg class="oi"><use href="#nul"/></svg><span class="nm">空白</span><svg class="vis"><use href="#vis"/></svg><i class="dots"></i><i class="st"></i></div>
      <div class="row d4"><i class="exp"></i><svg class="oi"><use href="#pol"/></svg><span class="nm">布尔</span><svg class="vis"><use href="#vis"/></svg><i class="dots"></i><i class="st"></i><svg class="tag"><use href="#flag"/></svg><svg class="tag"><use href="#chk"/></svg></div>
      <div class="row d4"><i class="exp"></i><svg class="oi"><use href="#pol"/></svg><span class="nm">布尔.2</span><svg class="vis"><use href="#vis"/></svg><i class="dots"></i><i class="st"></i><svg class="tag"><use href="#flag"/></svg><svg class="tag"><use href="#chk"/></svg></div>
      <div class="row d4"><i class="exp"></i><svg class="oi"><use href="#pol"/></svg><span class="nm">布尔.1</span><svg class="vis"><use href="#vis"/></svg><i class="dots"></i><i class="st"></i><svg class="tag"><use href="#flag"/></svg><svg class="tag"><use href="#chk"/></svg></div>
      <div class="row d4"><i class="exp box"></i><svg class="oi"><use href="#pol"/></svg><span class="nm">底盘后</span><svg class="vis"><use href="#vis"/></svg><i class="dots"></i><i class="st"></i><svg class="tag"><use href="#flag"/></svg><svg class="tag"><use href="#chk"/></svg></div>
      <div class="row d5"><i class="exp"></i><svg class="oi"><use href="#pol"/></svg><span class="nm">圆柱体</span><svg class="vis"><use href="#vis"/></svg><i class="dots"></i><i class="st"></i><svg class="tag"><use href="#flag"/></svg><svg class="tag"><use href="#chk"/></svg></div>
      <div class="row d3"><i class="exp"></i><svg class="oi"><use href="#pol"/></svg><span class="nm">引擎</span><svg class="vis"><use href="#vis"/></svg><i class="dots"></i><i class="st"></i><svg class="tag"><use href="#flag"/></svg><svg class="tag"><use href="#chk"/></svg></div>
      <div class="row d3"><i class="exp"></i><svg class="oi"><use href="#pol"/></svg><span class="nm">平面.1</span><svg class="vis"><use href="#vis"/></svg><i class="dots"></i><i class="st"></i><svg class="tag"><use href="#flag"/></svg><svg class="tag"><use href="#chk"/></svg></div>
      <div class="row d3"><i class="exp"></i><svg class="oi"><use href="#pol"/></svg><span class="nm">车头</span><svg class="vis"><use href="#vis"/></svg><i class="dots"></i><i class="st"></i><svg class="tag"><use href="#flag"/></svg><svg class="tag"><use href="#chk"/></svg></div>
      <div class="row d3 yel"><i class="exp"></i><svg class="oi"><use href="#pol"/></svg><span class="nm">车头.3</span><svg class="vis"><use href="#vis"/></svg><i class="dots"></i><i class="st"></i><svg class="tag"><use href="#flag"/></svg><svg class="tag"><use href="#chk"/></svg></div>
      <div class="row d3"><i class="exp"></i><svg class="oi"><use href="#pol"/></svg><span class="nm">车头.2</span><svg class="vis"><use href="#vis"/></svg><i class="dots"></i><i class="st"></i><svg class="tag"><use href="#flag"/></svg><svg class="tag"><use href="#chk"/></svg></div>
      <div class="row d3"><i class="exp"></i><svg class="oi"><use href="#pol"/></svg><span class="nm">车头.1</span><svg class="vis"><use href="#vis"/></svg><i class="dots"></i><i class="st"></i><svg class="tag"><use href="#flag"/></svg><svg class="tag"><use href="#chk"/></svg></div>
    </div>
    <div class="collapse"><svg viewBox="0 0 8 12"><path d="M7 1v10L1 6z" fill="#eee"/></svg></div>

    <div class="ptabs attr-tabs"><span class="on">属性</span><span>层</span></div>
    <div class="pmenu attr-menu">
      <svg class="burger"><use href="#burger"/></svg>
      <span>模式</span><span>编辑</span><span>用户数据</span>
      <div class="pm-ic">
        <svg viewBox="0 0 12 12"><path d="M11 6H2M5.500 2.500 2 6l3.500 3.500" fill="none" stroke="#aaa" stroke-width="1.400"/></svg>
        <svg viewBox="0 0 12 12"><path d="M1 6h9M6.500 2.500 10 6 6.500 9.500" fill="none" stroke="#444" stroke-width="1.400"/></svg>
        <svg viewBox="0 0 12 12"><path d="M6 11V2M2.500 5.500 6 2l3.500 3.500" fill="none" stroke="#444" stroke-width="1.400"/></svg>
        <svg viewBox="0 0 12 12"><circle cx="5" cy="5" r="3.500" fill="none" stroke="#aaa"/><path d="M8 8l3.500 3.500" stroke="#aaa" stroke-width="1.300"/></svg>
        <svg viewBox="0 0 12 12"><path d="M1 2.500h10M3 6h6M5 9.500h2" stroke="#aaa" stroke-width="1.300"/></svg>
        <svg viewBox="0 0 12 12"><path d="M3 6V3.500a3 3 0 0 1 6 0V6M2 6h8v5H2z" fill="none" stroke="#aaa"/></svg>
        <svg viewBox="0 0 12 12"><circle cx="6" cy="6" r="5" fill="none" stroke="#aaa"/><circle cx="6" cy="6" r="2" fill="none" stroke="#aaa"/></svg>
        <svg viewBox="0 0 12 12"><path d="M10 6v5H1V2h5M6 6l5-5M7.500 1H11v3.500" fill="none" stroke="#aaa"/></svg>
      </div>
    </div>
    <div class="objrow">
      <svg class="obj-ic" viewBox="0 0 12 12"><rect width="12" height="12" fill="#bdb9ae"/><rect x="3" y="3" width="6" height="6" fill="#c78e38"/></svg>
      <span>封闭多边形孔洞</span>
      <div class="dd"><span>自定义</span><svg viewBox="0 0 8 8"><path d="M1 2.500h6L4 6z" fill="#aaa"/></svg></div>
    </div>
    <h3 class="opt">选项</h3>
    <div class="form">
      <div class="f-row seg-row">
        <label>多边形类型</label>
        <div class="seg-wrap">
          <div class="seg"><span>N-gon</span><span>三角面</span><span>四边面</span></div>
          <span class="seg-on">网格</span>
        </div>
      </div>
      <div class="f-row"><label>选择新多边形</label><i class="cb"></i></div>
      <div class="f-row"><label>选择外轮廓</label><i class="cb"></i></div>
      <div class="f-row"><label>断开外轮廓平滑着色</label><i class="cb"></i></div>
    </div>
  </aside>
</div>

<footer class="status">
  <svg class="burger"><use href="#burger"/></svg>
  <svg class="st-ok" viewBox="0 0 12 12"><circle cx="6" cy="6" r="5" fill="none" stroke="#777"/><path d="M3.500 6 5.500 8 8.500 4" fill="none" stroke="#888"/></svg>
  <span>封闭多边形孔洞：选择并点击多边形孔洞将其关闭。</span>
</footer>

<div class="watermark">
  <svg viewBox="0 0 76 46"><path d="M5 4c-6 8-4 22 3 32M14 7l5-5 6 5h22l6-5 5 5c5 1 7 5 7 9v18c0 6-4 10-10 10H20c-6 0-10-4-10-10V16c0-4 1-8 4-9z" fill="none" stroke="currentColor" stroke-width="2.500"/><path d="M36 20v14l11-7z" fill="currentColor"/></svg>
  <span>虎课网</span>
</div>
</body>
</html>
```

FILE: styles.css
```css
* { box-sizing: border-box; }
html, body { margin: 0; padding: 0; }
body {
  width: 1920px; height: 1080px; overflow: hidden; position: relative;
  display: flex; flex-direction: column;
  background: #2a2a2a; color: #a4a4a4;
  font: 12px/1.2 Roboto, "Noto Sans CJK SC", sans-serif;
}
svg { display: block; flex: none; }
button { all: unset; box-sizing: border-box; display: flex; align-items: center; justify-content: center; }
.defs { position: absolute; }

/* title */
.title { height: 19px; flex: none; background: #fff; border-top: 3px solid #2b2b2b; display: flex; align-items: center; padding-left: 3px; color: #333; font-size: 10px; }
.t-logo { width: 11px; height: 11px; margin-right: 4px; }
.winbtns { margin-left: auto; display: flex; gap: 21px; padding-right: 7px; }
.winbtns svg { width: 13px; height: 13px; }

/* tabs */
.tabs { height: 28px; flex: none; background: #1a1a1a; display: flex; align-items: center; font-size: 12px; color: #5e5e5e; padding-top: 2px; }
.undo { width: 19px; height: 12px; margin-left: 7px; }
.redo { width: 18px; height: 12px; margin-left: 9px; }
.doc { margin-left: 15px; width: 164px; font-size: 11.500px; color: #555; }
.doc-on { width: 173px; height: 26px; background: #232323; display: flex; align-items: center; color: #aaa; padding-left: 47px; }
.doc-on b { margin-left: auto; margin-right: 7px; color: #ddd; font-size: 15px; }
.plus { margin-left: 11px; color: #d0d0d0; font-size: 17px; font-weight: 700; width: 14px; }
.layouts { margin-left: 589px; display: flex; gap: 43.500px; height: 26px; align-items: center; }
.layouts span { color: #525252; position: relative; line-height: 26px; }
.layouts .on { color: #c8c8c8; font-style: italic; }
.layouts .on::after { content: ""; position: absolute; left: -6px; right: -6px; bottom: 0; height: 2px; background: #5c679c; }
.layouts .nodes { margin-left: 5px; }
.plus2 { margin-left: 38px; color: #999; font-size: 15px; }
.bar-sep { width: 1px; height: 18px; background: #555; margin-left: 25px; }
.newui { margin-left: 14px; color: #a8a8a8; width: 46px; }
.toggle { width: 20px; height: 11px; border-radius: 6px; background: #e8e8e8; margin-left: 8px; position: relative; }
.toggle::after { content: ""; position: absolute; right: 1px; top: 1px; width: 9px; height: 9px; border-radius: 50%; background: #222; }

/* menu */
.menu { height: 25px; flex: none; background: #262626; display: flex; align-items: center; gap: 10.500px; padding: 2px 0 0 6px; color: #8e8e8e; }
.menu .hi { color: #cdd0a4; }
.menu .wh { color: #d4d4d4; }

.work { flex: 1; min-height: 0; display: flex; }
.stage { width: 1640px; flex: none; display: flex; flex-direction: column; }

/* toolbar */
.toolbar { height: 24px; flex: none; background: #2b2b2b; display: flex; align-items: center; padding-top: 2px; }
.tg { display: flex; background: #343434; border-radius: 3px; }
.b { width: 21px; height: 22px; border-radius: 2px; }
.b svg { width: 14px; height: 14px; }
.blue { background: #4f5b9c; }
.archive { margin-left: 34px; }
.xyz { margin-left: 8px; background: #333; }
.ax { font-size: 10px; color: #bbb; position: relative; }
.ax::after { content: ""; position: absolute; left: 6px; right: 6px; bottom: 3px; height: 1px; }
.ax.x { color: #b07c78; } .ax.x::after { background: #b04a44; }
.ax.y { color: #a8b08c; } .ax.y::after { background: #6da06a; }
.ax.z { color: #8c98b4; } .ax.z::after { background: #4f6ea8; }
.center-tools { margin-left: 482px; display: flex; gap: 8px; }
.snap { margin-left: 8px; }
.right-tools { margin-left: 481px; }
.last-tool { margin-left: 7px; }

.mid { flex: 1; min-height: 0; display: flex; }

/* left tools */
.tools { width: 28px; flex: none; background: #2a2a2a; display: flex; flex-direction: column; }
.search { height: 23px; flex: none; display: flex; align-items: center; justify-content: center; background: #2f2f2f; }
.search svg { width: 17px; height: 17px; }
.tool-g { background: #363636; }
.g1 { margin-top: 10px; }
.g2 { margin-top: 7px; }
.g3 { margin-top: 7px; }
.g4 { margin-top: 2.500px; }
.tb { width: 28px; height: 28px; }
.g3 .tb { height: 27.700px; }
.tb svg { width: 18px; height: 18px; }
.tb-on { background: #4f5b9c; width: 27px; }

/* center */
.center { width: 1579px; flex: none; display: flex; flex-direction: column; border-left: 2px solid #222; }
.viewbar { height: 23px; flex: none; background: #2b2b2b; display: flex; align-items: center; gap: 11px; padding-left: 4px; color: #8e8e8e; border-bottom: 1px solid #4a4a4a; margin-left: -2px; }
.burger { width: 12px; height: 12px; }
.viewbar .burger { margin-left: 1px; margin-right: -6px; }
.nav-ic { margin-left: auto; display: flex; gap: 4px; padding-right: 1px; }
.nav-ic svg { width: 12px; height: 12px; }
.viewport { position: relative; height: 858px; flex: none; overflow: hidden; }
.scene { position: absolute; left: 0; top: 0; }
.m0 { fill: #1b2529; } .m1 { fill: #1f2121; } .m2 { fill: #252626; } .m3 { fill: #2b2c2c; }
.m4 { fill: #333535; } .m5 { fill: #393b3b; } .m6 { fill: #3e4040; } .m7 { fill: #444646; }
.mesh polygon { stroke: #46606f; stroke-width: 1; }
.apron { fill: #444646 !important; }
.stripe { fill: #14191b !important; }
.edge { fill: none; stroke: #46606f; }
.ledge { fill: #4b4e50 !important; }
.edge2 { fill: none; stroke: #486a80; stroke-width: 2; }
.low1 { fill: #0a0d0e !important; }
.low2 { fill: #111415 !important; }
.base { fill: #4c4e4e !important; stroke: none !important; }
.face { fill: #b2b2b2 !important; stroke: none !important; }
.rim { fill: none; stroke: #f4f4f4; stroke-width: 1.500; }
.rim2 { fill: none; stroke: #fff; stroke-width: 2.200; }
.scene text { font: 12px Roboto, sans-serif; }
.ax-y { fill: #3d9a6f; } .ax-x { fill: #b03a34; } .ax-z { fill: #4a6ca8; }

.vp-title { position: absolute; left: 2px; top: 5px; color: #bbb; }
.stats { position: absolute; left: 2px; top: 25px; display: grid; grid-template-columns: 44px 31px; grid-auto-rows: 20px; align-items: center; background: #2c2c2c; color: #b0b0b0; }
.stats span:nth-child(2), .stats span:nth-child(4) { color: #999; }
.cam { position: absolute; left: 748px; top: 5px; color: #bbb; display: flex; align-items: center; gap: 3px; }
.cam svg { width: 11px; height: 11px; }
.hint { position: absolute; left: 3px; top: 280px; color: #c8c8c8; display: flex; align-items: center; gap: 3px; }
.hint svg { width: 12px; height: 12px; }
.caption { position: absolute; left: 1160px; top: 193px; color: #ee1a14; font-size: 20.800px; line-height: 26px; white-space: nowrap; }
.gridinfo { position: absolute; right: 13px; bottom: 3px; color: #a8a8a8; white-space: nowrap; }

/* strip */
.strip { width: 33px; flex: none; background: #2a2a2a; border-left: 2px solid #222; display: flex; flex-direction: column; align-items: center; }
.sg { width: 26px; background: #353535; border-radius: 2px; }
.sb { width: 26px; height: 28px; }
.sb svg { width: 19px; height: 19px; }
.s1 { margin-top: 0; }
.s2 { margin-top: 10px; }
.s3 { margin-top: 8px; }
.s4 { margin-top: 1px; }
.s5 { margin-top: 9.500px; }
.s6 { margin-top: 12px; }
.s1 .sb { height: 24px; }
.s2 .sb, .s3 .sb { height: 27.500px; }
.s4 .sb { height: 29px; }
.s5 .sb { height: 27px; }
.s6 .sb svg { width: 17px; }

/* timeline */
.timeline { height: 71px; flex: none; background: #2b2b2b; border-top: 1px solid #444; display: flex; flex-direction: column; }
.transport { height: 28px; flex: none; display: flex; align-items: center; padding-top: 6px; }
.key { margin-left: 33px; background: #383838; width: 22px; }
.play { margin-left: 498px; height: 22px; background: #343434; border-radius: 3px; display: flex; align-items: center; width: 149px; justify-content: space-around; padding: 0 3px; }
.play svg { width: 12px; height: 12px; }
.play svg:nth-child(4) { width: 14px; height: 14px; }
.loop { margin-left: 8px; display: flex; }
.loop .b { width: 20px; }
.loop .plain { width: 22px; }
.frame { margin-left: 10px; width: 70px; height: 22px; background: #1c1c1c; border-radius: 3px; display: flex; align-items: center; justify-content: center; color: #a8a8a8; }
.rec { margin-left: 8px; }
.rec2 { margin-left: 7px; }
.rec3 { margin-left: 7px; }
.curve { margin-left: 500px; background: #353535; }
.ruler { height: 23px; flex: none; display: flex; align-items: center; padding-left: 22px; width: 1607px; overflow: hidden; color: #8c8c8c; font-size: 11.500px; }
.ruler span { width: 34.750px; flex: none; text-align: center; position: relative; }
.ruler .cur::before { content: ""; position: absolute; left: 14px; top: -3px; width: 7px; height: 20px; background: #5f6cb0; z-index: -1; }
.ruler .cur { z-index: 1; }
.range { height: 15px; flex: none; display: flex; gap: 7px; padding-left: 34px; width: 1610px; }
.field { width: 71px; background: #1f1f1f; color: #a0a0a0; display: flex; align-items: center; justify-content: center; font-size: 11.500px; }
.slider { flex: 1; background: #444; display: flex; align-items: center; justify-content: space-between; padding: 0 10px; color: #a8a8a8; font-size: 11.500px; }

/* side */
.side { width: 280px; flex: none; background: #2a2a2a; display: flex; flex-direction: column; position: relative; }
.ptabs { height: 24px; flex: none; background: #1d1d1d; display: flex; align-items: flex-end; font-size: 12px; }
.ptabs span { width: 45px; height: 24px; text-align: center; color: #505050; line-height: 27px; }
.ptabs .on { color: #bcbcbc; background: #2a2a2a; }
.pmenu { height: 23px; flex: none; display: flex; align-items: center; gap: 10.500px; padding-left: 3px; color: #9a9a9a; }
.pmenu .burger { margin-right: -4px; }
.pmenu em { font-style: normal; margin-left: -1px; }
.pm-ic { margin-left: auto; display: flex; gap: 3px; padding-right: 3px; }
.pm-ic svg { width: 12px; height: 12px; }
.tree { flex: none; height: 491px; padding-top: 1px; }
.row { height: 17.520px; display: flex; align-items: center; color: #9a9a9a; padding-left: var(--d); }
.row:nth-child(odd) { background: linear-gradient(90deg, #242424 0, #242424 150px, transparent 150px); }
.d0 { --d: 1px; } .d1 { --d: 10px; } .d2 { --d: 19px; } .d3 { --d: 27px; } .d4 { --d: 36px; } .d5 { --d: 45px; }
.exp { width: 9px; height: 9px; flex: none; position: relative; margin-right: 1px; }
.exp::after { content: ""; position: absolute; left: 3px; right: 0; top: 4px; height: 1px; background: #454545; }
.box { border: 1px solid #555; }
.box::after { left: 1px; right: 1px; top: 3px; background: #666; }
.oi { width: 13px; height: 13px; margin-right: 2px; }
.nm { width: calc(92px - var(--d)); white-space: nowrap; font-size: 11.800px; flex: none; }
.vis { width: 10px; height: 10px; }
.dots { width: 5px; height: 13px; margin-left: 3px; margin-right: 1px; flex: none; background: radial-gradient(circle, #5c5c5c 2px, transparent 2.500px) 0 0/5px 6.500px; }
.dots.red { background-image: radial-gradient(circle, #c04a44 2px, transparent 2.500px); }
.st { width: 11px; height: 11px; flex: none; margin-left: 1px; margin-right: 5px; }
.tag { width: 11px; height: 11px; margin-right: 4px; }
.org .nm { color: #c07a22; }
.yel .nm { color: #d8b85a; }
.collapse { position: absolute; right: 0; top: 481px; width: 16px; height: 45px; background: #1c1c1c; display: flex; align-items: center; justify-content: center; }
.collapse svg { width: 7px; height: 12px; }
.attr-tabs { margin-top: 35px; height: 21px; }
.attr-tabs span { width: 42px; height: 21px; line-height: 21px; }
.attr-menu { height: 23px; gap: 8px; }
.attr-menu .burger { margin-right: 0; }
.objrow { height: 26px; flex: none; display: flex; align-items: center; padding-left: 6px; color: #8a8a8a; }
.obj-ic { width: 11px; height: 11px; margin-right: 6px; }
.dd { margin-left: auto; margin-right: 6px; width: 82px; height: 18px; background: #333; display: flex; align-items: center; padding: 0 5px; justify-content: space-between; color: #999; border-radius: 2px; }
.dd svg { width: 8px; height: 8px; }
.opt { margin: 8px 0 0; padding-left: 5px; font-size: 12px; font-weight: 400; color: #c4c4c4; height: 16px; line-height: 16px; }
.form { padding-top: 6px; }
.f-row { display: flex; align-items: center; min-height: 20.500px; padding-left: 20px; color: #868686; }
.f-row label { width: 113px; white-space: nowrap; font-size: 11.500px; }
.seg-row { align-items: flex-start; margin-bottom: 2px; }
.seg { display: flex; width: 138px; height: 18px; background: #353535; align-items: center; justify-content: space-between; padding: 0 2px 0 5px; color: #a0a0a0; font-size: 12px; }
.seg-wrap { display: flex; flex-direction: column; align-items: flex-start; }
.seg-on { width: 46px; height: 19px; background: #565656; color: #d4d4d4; text-align: center; line-height: 19px; border-radius: 1px; }
.cb { width: 9px; height: 9px; border: 1px solid #777; border-radius: 1px; }

/* status */
.status { height: 32px; flex: none; background: #1b1b1b; display: flex; align-items: flex-start; padding: 4px 0 0 3px; color: #a0a0a0; }
.status .burger { margin-right: 7px; margin-top: 1px; }
.st-ok { width: 11px; height: 11px; margin-top: 2px; margin-right: 6px; }

/* watermark */
.watermark { position: absolute; left: 1690px; top: 18px; display: flex; align-items: center; gap: 2px; color: rgba(255,255,255,.2); pointer-events: none; }
.watermark svg { width: 72px; height: 44px; }
.watermark span { font-size: 46px; line-height: 46px; font-weight: 300; font-family: "Noto Sans CJK SC", sans-serif; }
```
